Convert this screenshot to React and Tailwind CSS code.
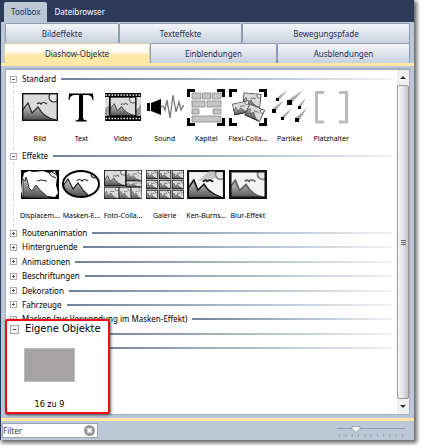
import React from 'react';
import clsx from 'clsx';

const Scene = ({ x = 0, y = 0, w = 36, h = 28, frame = 1.4, line = 1.2, soft = false }) => (
    <svg x={x} y={y} width={w} height={h} viewBox="0 0 36 28" preserveAspectRatio="none">
        <rect width="36" height="28" fill={soft ? '#f4f4f4' : '#dadada'} />
        <path d="M0 18 L6 10 L10 20 L16 14 Q22 25 34 28 H0Z" fill="url(#hill)" />
        <path
            d="M0 18 L6 10 L10 20 L16 14 Q22 25 34 27 M15 11 q2 -2 4 0 q2 -3 6 0"
            fill="none"
            stroke={soft ? '#666' : '#222'}
            strokeWidth={line}
        />
        <circle cx="32" cy="4" r="5" fill="#e8e8e8" stroke={soft ? '#888' : '#333'} strokeWidth={line} />
        <rect
            x={frame / 2}
            y={frame / 2}
            width={36 - frame}
            height={28 - frame}
            fill="none"
            stroke="#111"
            strokeWidth={frame}
        />
    </svg>
);

const Corners = () => (
    <path d="M1.5 9V2.5H8 M30 2.5h6.5V9 M1.5 30v6.5H8 M30 36.5h6.5V30" fill="none" stroke="#000" strokeWidth="3" />
);

const pictures = {
    bild: <Scene x={1} y={5} />,
    text: (
        <path
            d="M7 5.5H31L31.5 12H30.5Q30 7 25 7H21V29Q21 32.5 25 32.5V33.5H13.5V32.5Q17 32.5 17 29V7H13Q8 7 7.5 12H6.5Z"
            fill="#000"
        />
    ),
    video: (
        <g>
            <rect x="1" y="5" width="36" height="27" fill="#fff" />
            <Scene x={6} y={9} w={26} h={19} frame={1} />
            <path d="M1 9h5v7l-5 5z M32 9h5v7l-5 3z" fill="#ddd" />
            <path d="M1 28v-7l5-5v12z M32 28v-6l5-6v12z" fill="#999" />
            <path d="M1 9v-4h36v4z M1 28h36v5h-36z" fill="#000" />
            <path d="M1.5 7h36 M1.5 30.500h36" stroke="#fff" strokeWidth="1.6" strokeDasharray="1.5 1.5" />
            <path d="M5.5 9v19 M32 9v19" stroke="#000" />
        </g>
    ),
    sound: (
        <g>
            <path d="M1 15h3v8H1z M5 15l10-4v16l-10-4z" fill="#000" />
            <path
                d="M15 19l2-1 2 4 2-10 3 18 3-23 3 17 3-10 2 8 2-4h2"
                fill="none"
                stroke="#777"
                strokeWidth="1.3"
            />
        </g>
    ),
    kapitel: (
        <g>
            <path
                d="M5 5h9v6H5z M15.5 5h8v6h-8z M25 5h9v6h-9z M5 13h13v6H5z M20 13h14v6H20z M5 21h7v5H5z M26 21h8v5h-8z M5 28h29v6H5z"
                fill="#c4c4c4"
                stroke="#888"
                strokeWidth=".8"
            />
            <Corners />
        </g>
    ),
    flexi: (
        <g>
            <g transform="rotate(5 22 11)">
                <Scene x={14} y={5} w={18} h={14} />
            </g>
            <g transform="rotate(-12 12 20)">
                <Scene x={4} y={14} w={17} h={12} />
            </g>
            <g transform="rotate(24 25 25)">
                <Scene x={17} y={18} w={17} h={13} />
            </g>
            <Corners />
        </g>
    ),
    partikel: (
        <g>
            <path
                d="M5 10L17 2L7 13z M17 12L32 2L20 16z M1 21L13 12L4 24z M27 18L35 10L29 21z M10 29L21 20L12 32z M24 30L36 20L28 33z"
                fill="#aaa"
            />
            <path
                d="M5 10h3v3H5z M16 12h5v5h-5z M1 21h4v4H1z M27 18h3v3h-3z M10 29h3v3h-3z M24 30h4v4h-4z"
                fill="#000"
            />
        </g>
    ),
    platzhalter: <path d="M12 4.5H4.5V34H12 M27 4.5h7.5V34H27" fill="none" stroke="#bcbcbc" strokeWidth="3" />,
    displacement: (
        <g>
            <rect x="0" y="5" width="38" height="29" fill="#000" />
            <path d="M3 8l5-2 5 1 9-1 6 2 6-2 2 6-1 8 2 8-3 4-8-1-9 1-7-1-8 1-2-6 1-9z" fill="#fff" />
            <path d="M2 14l2 2 1-4 2 6 1 5 3 3 4-6 4 5 9 8-26-1z" fill="url(#hill)" stroke="#333" />
            <path d="M16 16l4-1 6 1 M28 8q2 4 7 5 M31 7l5 3" fill="none" stroke="#222" />
        </g>
    ),
    masken: (
        <g>
            <ellipse cx="19" cy="19" rx="18" ry="13" fill="#fff" />
            <path d="M1 21l5-7 5 10 5-6q5 8 11 13q-9 2-18-1q-7-4-8-9" fill="url(#hill)" />
            <path
                d="M1 21l5-7 5 10 5-6q5 8 11 13 M15 16q2-3 5 0q2-3 6 0 M29 9q0 4 5 4"
                fill="none"
                stroke="#222"
                strokeWidth="1.2"
            />
            <ellipse cx="19" cy="19" rx="18" ry="13" fill="none" stroke="#000" strokeWidth="2" />
        </g>
    ),
    foto: (
        <g>
            <rect x="0" y="5" width="38" height="29" fill="#777" />
            <Scene x={0} y={5} w={22} h={16} />
            <Scene x={22} y={5} w={16} h={11} />
            <Scene x={22} y={16} w={16} h={6} />
            <Scene x={0} y={22} w={15} h={12} />
            <Scene x={15} y={22} w={12} h={12} />
            <Scene x={27} y={22} w={11} h={12} />
        </g>
    ),
    galerie: (
        <g>
            <rect x="0" y="5" width="38" height="29" fill="#aaa" />
            {[0, 13, 26].map((x) =>
                [5, 15, 25].map((y) => <Scene key={`${x}-${y}`} x={x} y={y} w={12} h={9} frame={2} line={1.6} />),
            )}
        </g>
    ),
    kenburns: (
        <g>
            <Scene x={0} y={5} w={38} h={29} frame={2} line={1.6} soft />
            <path d="M11 16L22 6H28V14z" fill="#aaa" opacity=".6" />
            <path d="M1 24l6-9 4 10 6-6q5 9 17 13 M16 17q2-3 5-1q2-2 5 1" fill="none" stroke="#111" strokeWidth="1.3" />
        </g>
    ),
    blur: <Scene x={0} y={5} w={38} h={29} frame={2.4} line={1.8} soft />,
};

const groups = [
    {
        title: 'Standard',
        items: [
            { icon: 'bild', label: 'Bild' },
            { icon: 'text', label: 'Text' },
            { icon: 'video', label: 'Video' },
            { icon: 'sound', label: 'Sound' },
            { icon: 'kapitel', label: 'Kapitel' },
            { icon: 'flexi', label: 'Flexi-Colla...' },
            { icon: 'partikel', label: 'Partikel' },
            { icon: 'platzhalter', label: 'Platzhalter' },
        ],
    },
    {
        title: 'Effekte',
        items: [
            { icon: 'displacement', label: 'Displacem...' },
            { icon: 'masken', label: 'Masken-E...' },
            { icon: 'foto', label: 'Foto-Colla...' },
            { icon: 'galerie', label: 'Galerie' },
            { icon: 'kenburns', label: 'Ken-Burns...' },
            { icon: 'blur', label: 'Blur-Effekt' },
        ],
    },
];

const closedGroups = [
    'Routenanimation',
    'Hintergruende',
    'Animationen',
    'Beschriftungen',
    'Dekoration',
    'Fahrzeuge',
    'Masken (zur Verwendung im Masken-Effekt)',
];

const tabRows = [
    ['Bildeffekte', 'Texteffekte', 'Bewegungspfade'],
    ['Diashow-Objekte', 'Einblendungen', 'Ausblendungen'],
];

const tabColumns = ['grid-cols-[114fr_123fr_168fr] pl-px', 'grid-cols-[146fr_127fr_133fr]'];

const Toggle = ({ open, large }) => (
    <svg className={clsx('shrink-0', large ? 'size-[9px]' : 'size-[7px]')} viewBox="0 0 7 7">
        <rect x=".5" y=".5" width="6" height="6" fill="#fff" stroke="#999" strokeWidth=".8" />
        <path d={open ? 'M2 3.5h3' : 'M2 3.5h3M3.5 2v3'} stroke="#3b4a80" strokeWidth=".9" />
    </svg>
);

const Rule = () => <span className="h-[2px] flex-1 bg-linear-to-r from-[#71819c] to-[#f0f2f5]"></span>;

const GroupHeader = ({ title, open }) => (
    <button type="button" className="flex h-3 w-full items-center gap-[5px] pl-1 text-left text-black">
        <Toggle open={open} />
        <span className="whitespace-nowrap">{title}</span>
        <Rule />
    </button>
);

const Group = ({ title, items }) => (
    <section>
        <GroupHeader title={title} open />
        <div className="ml-[7px] h-[65px] border-l border-dashed border-gray-300 pt-[3px] pl-[5px]">
            <div className="grid w-[333px] grid-cols-8">
                {items.map((item) => (
                    <button key={item.icon} type="button" className="flex flex-col items-center">
                        <svg className="size-[38px] shrink-0" viewBox="0 0 38 38">
                            {pictures[item.icon]}
                        </svg>
                        <span className="mt-[7px] text-[7px] leading-3 whitespace-nowrap text-black">{item.label}</span>
                    </button>
                ))}
            </div>
        </div>
    </section>
);

const Scrollbar = () => (
    <div className="flex w-3 shrink-0 flex-col bg-[#f0f0f0]">
        <button type="button" aria-label="Nach oben" className="flex h-[15px] items-center justify-center">
            <svg className="h-[3px] w-[6px]" viewBox="0 0 6 3">
                <path d="M0 3L3 0L6 3z" fill="#333" />
            </svg>
        </button>
        <div className="flex flex-1 flex-col items-center justify-center gap-px rounded-xs border border-[#999] bg-linear-to-r from-[#f7f7f7] via-[#e3e3e5] to-[#c2c3c7]">
            <span className="h-px w-[5px] bg-[#666]"></span>
            <span className="h-px w-[5px] bg-[#666]"></span>
            <span className="h-px w-[5px] bg-[#666]"></span>
        </div>
        <button type="button" aria-label="Nach unten" className="flex h-[15px] items-center justify-center">
            <svg className="h-[3px] w-[6px]" viewBox="0 0 6 3">
                <path d="M0 0L3 3L6 0z" fill="#333" />
            </svg>
        </button>
    </div>
);

const SizeSlider = () => {
    const [size, setSize] = React.useState(27);
    const pos = 2 + (size / 100) * 63;

    return (
        <div className="relative mr-2 h-[14px] w-[69px]">
            <svg className="h-[14px] w-[69px]" viewBox="0 0 69 14">
                <path d="M0 4.5h68" stroke="#8d9ab0" />
                {Array.from({ length: 11 }, (_, i) => (
                    <path key={i} d={`M${2.5 + i * 6.3} 10.5v2`} stroke="#8594ad" />
                ))}
                <path d={`M${pos - 4} 2.5h8v2l-4 4l-4-4z`} fill="#f5f5f5" stroke="#8a94a5" strokeWidth=".8" />
            </svg>
            <input
                type="range"
                aria-label="Symbolgröße"
                value={size}
                onChange={(e) => setSize(Number(e.target.value))}
                className="absolute inset-0 w-full opacity-0"
            />
        </div>
    );
};

const App = () => {
    const [activeTab, setActiveTab] = React.useState('Diashow-Objekte');
    const [filter, setFilter] = React.useState('');

    return (
        <div className="bg-white pr-[7px] pb-[6px] font-['Noto_Sans',sans-serif] text-[8px] leading-3 text-[#1e2f4b]">
            <svg className="absolute size-0" aria-hidden="true">
                <linearGradient id="hill" x1="0" y1="0" x2="0" y2="1">
                    <stop offset="0" stopColor="#d0d0d0" />
                    <stop offset="1" stopColor="#4a4a4a" />
                </linearGradient>
            </svg>
            <div className="border-l border-[#2b3b59] bg-[#bcc7d8] shadow-[2px_2px_4px_1px_rgba(0,0,0,0.6)]">
                <header className="flex h-[22px] items-end bg-[#2b3b59] pl-[3px]">
                    <button type="button" className="h-5 rounded-t-xs bg-[#bcc7d8] px-[7px]">
                        Toolbox
                    </button>
                    <button type="button" className="h-5 px-[7px] text-white">
                        Dateibrowser
                    </button>
                </header>

                <nav className="flex flex-col pt-px pr-1 pl-[3px]">
                    {tabRows.map((row, index) => (
                        <div key={index} className={clsx('grid', tabColumns[index])}>
                            {row.map((tab) => (
                                <button
                                    key={tab}
                                    type="button"
                                    onClick={() => setActiveTab(tab)}
                                    className={clsx(
                                        'h-5 rounded-t-xs border border-b-0',
                                        tab === activeTab
                                            ? 'border-[#d8cfae] bg-linear-to-b from-[#fffdf5] from-30% via-[#fff4d2] via-50% to-[#ffe8a6] to-60%'
                                            : 'border-[#8e9bb4] bg-linear-to-b from-[#f3f5f8] via-[#dfe4ec] to-[#c8d0dd]',
                                    )}
                                >
                                    {tab}
                                </button>
                            ))}
                        </div>
                    ))}
                </nav>
                <div className="h-[3px] bg-[#ffe8a6]"></div>

                <main className="relative mx-1 mt-[2px] mb-[3px] flex border border-t-2 border-[#a3adbd] bg-white">
                    <div className="flex h-[344px] min-w-0 flex-1 flex-col pt-[3px] pr-[4px]">
                        {groups.map((group) => (
                            <Group key={group.title} {...group} />
                        ))}
                        <div className="flex h-[127px] flex-col justify-between">
                            {closedGroups.map((title) => (
                                <GroupHeader key={title} title={title} />
                            ))}
                            <div className="flex h-3 items-center pl-20">
                                <Rule />
                            </div>
                            <div className="flex h-3 items-center pl-20">
                                <Rule />
                            </div>
                        </div>
                    </div>
                    <Scrollbar />

                    {/* enlarged group with the user's own objects */}
                    <section className="absolute bottom-0 -left-px h-[95px] w-[105px] rounded-xs border-2 border-[#f00a12] bg-white font-['DejaVu_Sans_Condensed','DejaVu_Sans',sans-serif] shadow-[1px_1px_3px_rgba(0,0,0,0.6)]">
                        <button
                            type="button"
                            className="flex items-center gap-[6px] pt-px pl-[3px] text-[11px] leading-[14px] whitespace-nowrap text-black"
                        >
                            <Toggle open large />
                            Eigene Objekte
                        </button>
                        <button
                            type="button"
                            className="mt-3 ml-[17px] flex w-[51px] flex-col items-center text-[9px] leading-3 text-black"
                        >
                            <span className="h-[34px] w-full border border-[#bbb] bg-[#a5a3a4]"></span>
                            <span className="mt-[16px]">16 zu 9</span>
                        </button>
                    </section>
                </main>

                <div className="h-[3px] bg-[#ffe8a6]"></div>
                <footer className="flex h-[19px] items-center justify-between pl-px">
                    <div className="flex h-[15px] w-24 items-center border border-[#9aa6b8] bg-white">
                        <input
                            type="text"
                            aria-label="Filter"
                            value={filter}
                            onChange={(e) => setFilter(e.target.value)}
                            placeholder="Filter"
                            className="w-full min-w-0 flex-1 placeholder:text-[#444]"
                        />
                        <button type="button" aria-label="Filter löschen" onClick={() => setFilter('')} className="mr-[2px]">
                            <svg className="size-[11px]" viewBox="0 0 11 11">
                                <circle cx="5.5" cy="5.5" r="5.5" fill="#999" />
                                <path d="M3.5 3.5l4 4M7.5 3.5l-4 4" stroke="#fff" strokeWidth="1.8" />
                            </svg>
                        </button>
                    </div>
                    <SizeSlider />
                </footer>
            </div>
        </div>
    );
};

export default App;
